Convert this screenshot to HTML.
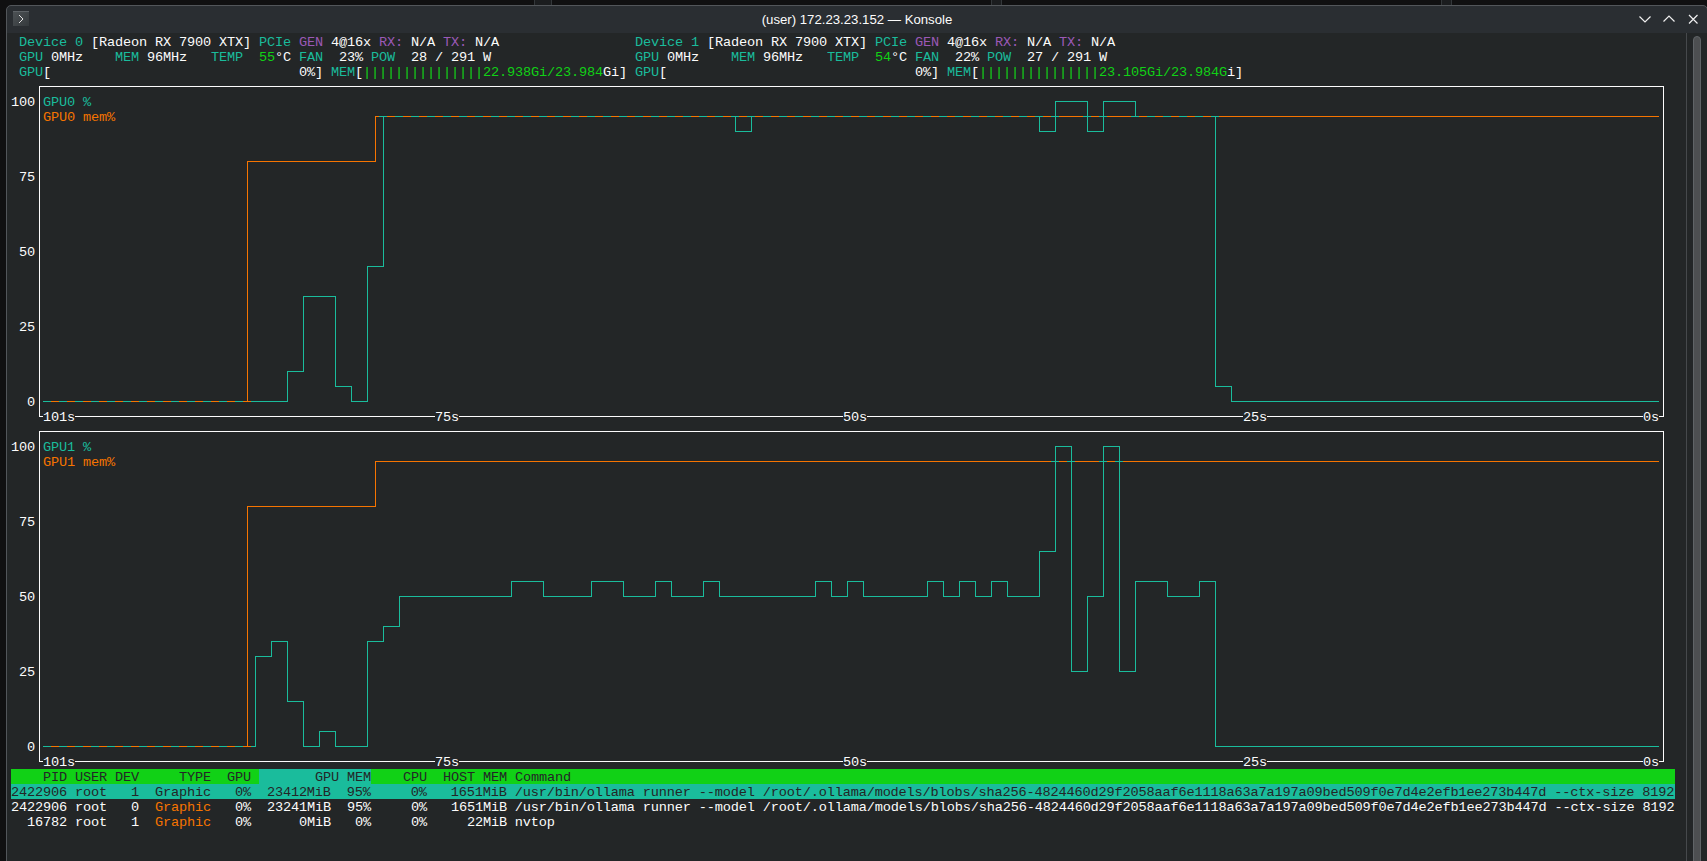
<!DOCTYPE html>
<html><head><meta charset="utf-8"><style>
html,body{margin:0;padding:0;width:1707px;height:861px;overflow:hidden;background:#101011;}
.win{position:absolute;left:6px;top:5px;width:1702px;height:900px;background:#2a2e32;border:1px solid #52565a;border-radius:5px 5px 0 0;box-sizing:border-box;}
.term{position:absolute;left:7px;top:33px;width:1700px;height:828px;background:#232627;}
.t{position:absolute;height:15px;line-height:15px;white-space:pre;font-family:"Liberation Mono",monospace;font-size:13.6px;letter-spacing:-0.161px;}
.plot{position:absolute;left:0;top:0;}
.bgr{position:absolute;height:15px;}
.title{position:absolute;left:0;width:1714px;top:12px;text-align:center;font-family:"Liberation Sans",sans-serif;font-size:13.2px;color:#fcfcfc;line-height:16px;}
.btn{position:absolute;left:13px;top:11px;width:16px;height:15px;background:linear-gradient(135deg,#4c5154,#34393c);border-top:1px solid #5e6367;box-sizing:border-box;}
.sbline{position:absolute;left:1686px;top:33px;width:1px;height:828px;background:#46494c;}
.sbh{position:absolute;left:1693px;top:36px;width:8px;height:900px;background:#4d4f51;border:1px solid #606467;border-radius:4px;box-sizing:border-box;}
.gap{position:absolute;top:-6px;height:11px;background:#1b1d1f;border-left:1px solid #33373a;border-right:1px solid #33373a;box-sizing:border-box;}
</style></head><body>
<div class="gap" style="left:534px;width:18px"></div>
<div class="gap" style="left:991px;width:11px"></div>
<div class="gap" style="left:1441px;width:11px"></div>
<div class="win"></div>
<div class="btn"></div>
<svg style="position:absolute;left:0;top:0" width="60" height="33"><path d="M19 15l4 4-4 4" fill="none" stroke="#e0e0e0" stroke-width="1"/></svg>
<div class="title">(user) 172.23.23.152 — Konsole</div>
<svg style="position:absolute;left:1630px;top:8px" width="77" height="22">
<path d="M9.5 8.5l5.5 5.5 5.5-5.5" fill="none" stroke="#f0f0f0" stroke-width="1.2"/>
<path d="M33.5 13.5l5.5-5.5 5.5 5.5" fill="none" stroke="#f0f0f0" stroke-width="1.2"/>
<path d="M59 7l8.5 8.5M67.5 7l-8.5 8.5" fill="none" stroke="#f0f0f0" stroke-width="1.2"/>
</svg>
<div class="term"></div>
<div class="sbline"></div>
<div class="sbh"></div>
<svg class="plot" width="1707" height="861"><path fill="#fcfcfc" d="M39 86h1v7h-1zM39 86h4v1h-4zM39 93h1v15h-1zM39 108h1v15h-1zM39 123h1v15h-1zM39 138h1v15h-1zM39 153h1v15h-1zM39 168h1v15h-1zM39 183h1v15h-1zM39 198h1v15h-1zM39 213h1v15h-1zM39 228h1v15h-1zM39 243h1v15h-1zM39 258h1v15h-1zM39 273h1v15h-1zM39 288h1v15h-1zM39 303h1v15h-1zM39 318h1v15h-1zM39 333h1v15h-1zM39 348h1v15h-1zM39 363h1v15h-1zM39 378h1v15h-1zM39 393h1v15h-1zM39 408h1v9h-1zM39 416h4v1h-4zM39 431h1v7h-1zM39 431h4v1h-4zM39 438h1v15h-1zM39 453h1v15h-1zM39 468h1v15h-1zM39 483h1v15h-1zM39 498h1v15h-1zM39 513h1v15h-1zM39 528h1v15h-1zM39 543h1v15h-1zM39 558h1v15h-1zM39 573h1v15h-1zM39 588h1v15h-1zM39 603h1v15h-1zM39 618h1v15h-1zM39 633h1v15h-1zM39 648h1v15h-1zM39 663h1v15h-1zM39 678h1v15h-1zM39 693h1v15h-1zM39 708h1v15h-1zM39 723h1v15h-1zM39 738h1v15h-1zM39 753h1v9h-1zM39 761h4v1h-4zM43 86h8v1h-8zM43 431h8v1h-8zM51 86h8v1h-8zM51 431h8v1h-8zM59 86h8v1h-8zM59 431h8v1h-8zM67 86h8v1h-8zM67 431h8v1h-8zM75 86h8v1h-8zM75 416h8v1h-8zM75 431h8v1h-8zM75 761h8v1h-8zM83 86h8v1h-8zM83 416h8v1h-8zM83 431h8v1h-8zM83 761h8v1h-8zM91 86h8v1h-8zM91 416h8v1h-8zM91 431h8v1h-8zM91 761h8v1h-8zM99 86h8v1h-8zM99 416h8v1h-8zM99 431h8v1h-8zM99 761h8v1h-8zM107 86h8v1h-8zM107 416h8v1h-8zM107 431h8v1h-8zM107 761h8v1h-8zM115 86h8v1h-8zM115 416h8v1h-8zM115 431h8v1h-8zM115 761h8v1h-8zM123 86h8v1h-8zM123 416h8v1h-8zM123 431h8v1h-8zM123 761h8v1h-8zM131 86h8v1h-8zM131 416h8v1h-8zM131 431h8v1h-8zM131 761h8v1h-8zM139 86h8v1h-8zM139 416h8v1h-8zM139 431h8v1h-8zM139 761h8v1h-8zM147 86h8v1h-8zM147 416h8v1h-8zM147 431h8v1h-8zM147 761h8v1h-8zM155 86h8v1h-8zM155 416h8v1h-8zM155 431h8v1h-8zM155 761h8v1h-8zM163 86h8v1h-8zM163 416h8v1h-8zM163 431h8v1h-8zM163 761h8v1h-8zM171 86h8v1h-8zM171 416h8v1h-8zM171 431h8v1h-8zM171 761h8v1h-8zM179 86h8v1h-8zM179 416h8v1h-8zM179 431h8v1h-8zM179 761h8v1h-8zM187 86h8v1h-8zM187 416h8v1h-8zM187 431h8v1h-8zM187 761h8v1h-8zM195 86h8v1h-8zM195 416h8v1h-8zM195 431h8v1h-8zM195 761h8v1h-8zM203 86h8v1h-8zM203 416h8v1h-8zM203 431h8v1h-8zM203 761h8v1h-8zM211 86h8v1h-8zM211 416h8v1h-8zM211 431h8v1h-8zM211 761h8v1h-8zM219 86h8v1h-8zM219 416h8v1h-8zM219 431h8v1h-8zM219 761h8v1h-8zM227 86h8v1h-8zM227 416h8v1h-8zM227 431h8v1h-8zM227 761h8v1h-8zM235 86h8v1h-8zM235 416h8v1h-8zM235 431h8v1h-8zM235 761h8v1h-8zM243 86h8v1h-8zM243 416h8v1h-8zM243 431h8v1h-8zM243 761h8v1h-8zM251 86h8v1h-8zM251 416h8v1h-8zM251 431h8v1h-8zM251 761h8v1h-8zM259 86h8v1h-8zM259 416h8v1h-8zM259 431h8v1h-8zM259 761h8v1h-8zM267 86h8v1h-8zM267 416h8v1h-8zM267 431h8v1h-8zM267 761h8v1h-8zM275 86h8v1h-8zM275 416h8v1h-8zM275 431h8v1h-8zM275 761h8v1h-8zM283 86h8v1h-8zM283 416h8v1h-8zM283 431h8v1h-8zM283 761h8v1h-8zM291 86h8v1h-8zM291 416h8v1h-8zM291 431h8v1h-8zM291 761h8v1h-8zM299 86h8v1h-8zM299 416h8v1h-8zM299 431h8v1h-8zM299 761h8v1h-8zM307 86h8v1h-8zM307 416h8v1h-8zM307 431h8v1h-8zM307 761h8v1h-8zM315 86h8v1h-8zM315 416h8v1h-8zM315 431h8v1h-8zM315 761h8v1h-8zM323 86h8v1h-8zM323 416h8v1h-8zM323 431h8v1h-8zM323 761h8v1h-8zM331 86h8v1h-8zM331 416h8v1h-8zM331 431h8v1h-8zM331 761h8v1h-8zM339 86h8v1h-8zM339 416h8v1h-8zM339 431h8v1h-8zM339 761h8v1h-8zM347 86h8v1h-8zM347 416h8v1h-8zM347 431h8v1h-8zM347 761h8v1h-8zM355 86h8v1h-8zM355 416h8v1h-8zM355 431h8v1h-8zM355 761h8v1h-8zM363 86h8v1h-8zM363 416h8v1h-8zM363 431h8v1h-8zM363 761h8v1h-8zM371 86h8v1h-8zM371 416h8v1h-8zM371 431h8v1h-8zM371 761h8v1h-8zM379 86h8v1h-8zM379 416h8v1h-8zM379 431h8v1h-8zM379 761h8v1h-8zM387 86h8v1h-8zM387 416h8v1h-8zM387 431h8v1h-8zM387 761h8v1h-8zM395 86h8v1h-8zM395 416h8v1h-8zM395 431h8v1h-8zM395 761h8v1h-8zM403 86h8v1h-8zM403 416h8v1h-8zM403 431h8v1h-8zM403 761h8v1h-8zM411 86h8v1h-8zM411 416h8v1h-8zM411 431h8v1h-8zM411 761h8v1h-8zM419 86h8v1h-8zM419 416h8v1h-8zM419 431h8v1h-8zM419 761h8v1h-8zM427 86h8v1h-8zM427 416h8v1h-8zM427 431h8v1h-8zM427 761h8v1h-8zM435 86h8v1h-8zM435 431h8v1h-8zM443 86h8v1h-8zM443 431h8v1h-8zM451 86h8v1h-8zM451 431h8v1h-8zM459 86h8v1h-8zM459 416h8v1h-8zM459 431h8v1h-8zM459 761h8v1h-8zM467 86h8v1h-8zM467 416h8v1h-8zM467 431h8v1h-8zM467 761h8v1h-8zM475 86h8v1h-8zM475 416h8v1h-8zM475 431h8v1h-8zM475 761h8v1h-8zM483 86h8v1h-8zM483 416h8v1h-8zM483 431h8v1h-8zM483 761h8v1h-8zM491 86h8v1h-8zM491 416h8v1h-8zM491 431h8v1h-8zM491 761h8v1h-8zM499 86h8v1h-8zM499 416h8v1h-8zM499 431h8v1h-8zM499 761h8v1h-8zM507 86h8v1h-8zM507 416h8v1h-8zM507 431h8v1h-8zM507 761h8v1h-8zM515 86h8v1h-8zM515 416h8v1h-8zM515 431h8v1h-8zM515 761h8v1h-8zM523 86h8v1h-8zM523 416h8v1h-8zM523 431h8v1h-8zM523 761h8v1h-8zM531 86h8v1h-8zM531 416h8v1h-8zM531 431h8v1h-8zM531 761h8v1h-8zM539 86h8v1h-8zM539 416h8v1h-8zM539 431h8v1h-8zM539 761h8v1h-8zM547 86h8v1h-8zM547 416h8v1h-8zM547 431h8v1h-8zM547 761h8v1h-8zM555 86h8v1h-8zM555 416h8v1h-8zM555 431h8v1h-8zM555 761h8v1h-8zM563 86h8v1h-8zM563 416h8v1h-8zM563 431h8v1h-8zM563 761h8v1h-8zM571 86h8v1h-8zM571 416h8v1h-8zM571 431h8v1h-8zM571 761h8v1h-8zM579 86h8v1h-8zM579 416h8v1h-8zM579 431h8v1h-8zM579 761h8v1h-8zM587 86h8v1h-8zM587 416h8v1h-8zM587 431h8v1h-8zM587 761h8v1h-8zM595 86h8v1h-8zM595 416h8v1h-8zM595 431h8v1h-8zM595 761h8v1h-8zM603 86h8v1h-8zM603 416h8v1h-8zM603 431h8v1h-8zM603 761h8v1h-8zM611 86h8v1h-8zM611 416h8v1h-8zM611 431h8v1h-8zM611 761h8v1h-8zM619 86h8v1h-8zM619 416h8v1h-8zM619 431h8v1h-8zM619 761h8v1h-8zM627 86h8v1h-8zM627 416h8v1h-8zM627 431h8v1h-8zM627 761h8v1h-8zM635 86h8v1h-8zM635 416h8v1h-8zM635 431h8v1h-8zM635 761h8v1h-8zM643 86h8v1h-8zM643 416h8v1h-8zM643 431h8v1h-8zM643 761h8v1h-8zM651 86h8v1h-8zM651 416h8v1h-8zM651 431h8v1h-8zM651 761h8v1h-8zM659 86h8v1h-8zM659 416h8v1h-8zM659 431h8v1h-8zM659 761h8v1h-8zM667 86h8v1h-8zM667 416h8v1h-8zM667 431h8v1h-8zM667 761h8v1h-8zM675 86h8v1h-8zM675 416h8v1h-8zM675 431h8v1h-8zM675 761h8v1h-8zM683 86h8v1h-8zM683 416h8v1h-8zM683 431h8v1h-8zM683 761h8v1h-8zM691 86h8v1h-8zM691 416h8v1h-8zM691 431h8v1h-8zM691 761h8v1h-8zM699 86h8v1h-8zM699 416h8v1h-8zM699 431h8v1h-8zM699 761h8v1h-8zM707 86h8v1h-8zM707 416h8v1h-8zM707 431h8v1h-8zM707 761h8v1h-8zM715 86h8v1h-8zM715 416h8v1h-8zM715 431h8v1h-8zM715 761h8v1h-8zM723 86h8v1h-8zM723 416h8v1h-8zM723 431h8v1h-8zM723 761h8v1h-8zM731 86h8v1h-8zM731 416h8v1h-8zM731 431h8v1h-8zM731 761h8v1h-8zM739 86h8v1h-8zM739 416h8v1h-8zM739 431h8v1h-8zM739 761h8v1h-8zM747 86h8v1h-8zM747 416h8v1h-8zM747 431h8v1h-8zM747 761h8v1h-8zM755 86h8v1h-8zM755 416h8v1h-8zM755 431h8v1h-8zM755 761h8v1h-8zM763 86h8v1h-8zM763 416h8v1h-8zM763 431h8v1h-8zM763 761h8v1h-8zM771 86h8v1h-8zM771 416h8v1h-8zM771 431h8v1h-8zM771 761h8v1h-8zM779 86h8v1h-8zM779 416h8v1h-8zM779 431h8v1h-8zM779 761h8v1h-8zM787 86h8v1h-8zM787 416h8v1h-8zM787 431h8v1h-8zM787 761h8v1h-8zM795 86h8v1h-8zM795 416h8v1h-8zM795 431h8v1h-8zM795 761h8v1h-8zM803 86h8v1h-8zM803 416h8v1h-8zM803 431h8v1h-8zM803 761h8v1h-8zM811 86h8v1h-8zM811 416h8v1h-8zM811 431h8v1h-8zM811 761h8v1h-8zM819 86h8v1h-8zM819 416h8v1h-8zM819 431h8v1h-8zM819 761h8v1h-8zM827 86h8v1h-8zM827 416h8v1h-8zM827 431h8v1h-8zM827 761h8v1h-8zM835 86h8v1h-8zM835 416h8v1h-8zM835 431h8v1h-8zM835 761h8v1h-8zM843 86h8v1h-8zM843 431h8v1h-8zM851 86h8v1h-8zM851 431h8v1h-8zM859 86h8v1h-8zM859 431h8v1h-8zM867 86h8v1h-8zM867 416h8v1h-8zM867 431h8v1h-8zM867 761h8v1h-8zM875 86h8v1h-8zM875 416h8v1h-8zM875 431h8v1h-8zM875 761h8v1h-8zM883 86h8v1h-8zM883 416h8v1h-8zM883 431h8v1h-8zM883 761h8v1h-8zM891 86h8v1h-8zM891 416h8v1h-8zM891 431h8v1h-8zM891 761h8v1h-8zM899 86h8v1h-8zM899 416h8v1h-8zM899 431h8v1h-8zM899 761h8v1h-8zM907 86h8v1h-8zM907 416h8v1h-8zM907 431h8v1h-8zM907 761h8v1h-8zM915 86h8v1h-8zM915 416h8v1h-8zM915 431h8v1h-8zM915 761h8v1h-8zM923 86h8v1h-8zM923 416h8v1h-8zM923 431h8v1h-8zM923 761h8v1h-8zM931 86h8v1h-8zM931 416h8v1h-8zM931 431h8v1h-8zM931 761h8v1h-8zM939 86h8v1h-8zM939 416h8v1h-8zM939 431h8v1h-8zM939 761h8v1h-8zM947 86h8v1h-8zM947 416h8v1h-8zM947 431h8v1h-8zM947 761h8v1h-8zM955 86h8v1h-8zM955 416h8v1h-8zM955 431h8v1h-8zM955 761h8v1h-8zM963 86h8v1h-8zM963 416h8v1h-8zM963 431h8v1h-8zM963 761h8v1h-8zM971 86h8v1h-8zM971 416h8v1h-8zM971 431h8v1h-8zM971 761h8v1h-8zM979 86h8v1h-8zM979 416h8v1h-8zM979 431h8v1h-8zM979 761h8v1h-8zM987 86h8v1h-8zM987 416h8v1h-8zM987 431h8v1h-8zM987 761h8v1h-8zM995 86h8v1h-8zM995 416h8v1h-8zM995 431h8v1h-8zM995 761h8v1h-8zM1003 86h8v1h-8zM1003 416h8v1h-8zM1003 431h8v1h-8zM1003 761h8v1h-8zM1011 86h8v1h-8zM1011 416h8v1h-8zM1011 431h8v1h-8zM1011 761h8v1h-8zM1019 86h8v1h-8zM1019 416h8v1h-8zM1019 431h8v1h-8zM1019 761h8v1h-8zM1027 86h8v1h-8zM1027 416h8v1h-8zM1027 431h8v1h-8zM1027 761h8v1h-8zM1035 86h8v1h-8zM1035 416h8v1h-8zM1035 431h8v1h-8zM1035 761h8v1h-8zM1043 86h8v1h-8zM1043 416h8v1h-8zM1043 431h8v1h-8zM1043 761h8v1h-8zM1051 86h8v1h-8zM1051 416h8v1h-8zM1051 431h8v1h-8zM1051 761h8v1h-8zM1059 86h8v1h-8zM1059 416h8v1h-8zM1059 431h8v1h-8zM1059 761h8v1h-8zM1067 86h8v1h-8zM1067 416h8v1h-8zM1067 431h8v1h-8zM1067 761h8v1h-8zM1075 86h8v1h-8zM1075 416h8v1h-8zM1075 431h8v1h-8zM1075 761h8v1h-8zM1083 86h8v1h-8zM1083 416h8v1h-8zM1083 431h8v1h-8zM1083 761h8v1h-8zM1091 86h8v1h-8zM1091 416h8v1h-8zM1091 431h8v1h-8zM1091 761h8v1h-8zM1099 86h8v1h-8zM1099 416h8v1h-8zM1099 431h8v1h-8zM1099 761h8v1h-8zM1107 86h8v1h-8zM1107 416h8v1h-8zM1107 431h8v1h-8zM1107 761h8v1h-8zM1115 86h8v1h-8zM1115 416h8v1h-8zM1115 431h8v1h-8zM1115 761h8v1h-8zM1123 86h8v1h-8zM1123 416h8v1h-8zM1123 431h8v1h-8zM1123 761h8v1h-8zM1131 86h8v1h-8zM1131 416h8v1h-8zM1131 431h8v1h-8zM1131 761h8v1h-8zM1139 86h8v1h-8zM1139 416h8v1h-8zM1139 431h8v1h-8zM1139 761h8v1h-8zM1147 86h8v1h-8zM1147 416h8v1h-8zM1147 431h8v1h-8zM1147 761h8v1h-8zM1155 86h8v1h-8zM1155 416h8v1h-8zM1155 431h8v1h-8zM1155 761h8v1h-8zM1163 86h8v1h-8zM1163 416h8v1h-8zM1163 431h8v1h-8zM1163 761h8v1h-8zM1171 86h8v1h-8zM1171 416h8v1h-8zM1171 431h8v1h-8zM1171 761h8v1h-8zM1179 86h8v1h-8zM1179 416h8v1h-8zM1179 431h8v1h-8zM1179 761h8v1h-8zM1187 86h8v1h-8zM1187 416h8v1h-8zM1187 431h8v1h-8zM1187 761h8v1h-8zM1195 86h8v1h-8zM1195 416h8v1h-8zM1195 431h8v1h-8zM1195 761h8v1h-8zM1203 86h8v1h-8zM1203 416h8v1h-8zM1203 431h8v1h-8zM1203 761h8v1h-8zM1211 86h8v1h-8zM1211 416h8v1h-8zM1211 431h8v1h-8zM1211 761h8v1h-8zM1219 86h8v1h-8zM1219 416h8v1h-8zM1219 431h8v1h-8zM1219 761h8v1h-8zM1227 86h8v1h-8zM1227 416h8v1h-8zM1227 431h8v1h-8zM1227 761h8v1h-8zM1235 86h8v1h-8zM1235 416h8v1h-8zM1235 431h8v1h-8zM1235 761h8v1h-8zM1243 86h8v1h-8zM1243 431h8v1h-8zM1251 86h8v1h-8zM1251 431h8v1h-8zM1259 86h8v1h-8zM1259 431h8v1h-8zM1267 86h8v1h-8zM1267 416h8v1h-8zM1267 431h8v1h-8zM1267 761h8v1h-8zM1275 86h8v1h-8zM1275 416h8v1h-8zM1275 431h8v1h-8zM1275 761h8v1h-8zM1283 86h8v1h-8zM1283 416h8v1h-8zM1283 431h8v1h-8zM1283 761h8v1h-8zM1291 86h8v1h-8zM1291 416h8v1h-8zM1291 431h8v1h-8zM1291 761h8v1h-8zM1299 86h8v1h-8zM1299 416h8v1h-8zM1299 431h8v1h-8zM1299 761h8v1h-8zM1307 86h8v1h-8zM1307 416h8v1h-8zM1307 431h8v1h-8zM1307 761h8v1h-8zM1315 86h8v1h-8zM1315 416h8v1h-8zM1315 431h8v1h-8zM1315 761h8v1h-8zM1323 86h8v1h-8zM1323 416h8v1h-8zM1323 431h8v1h-8zM1323 761h8v1h-8zM1331 86h8v1h-8zM1331 416h8v1h-8zM1331 431h8v1h-8zM1331 761h8v1h-8zM1339 86h8v1h-8zM1339 416h8v1h-8zM1339 431h8v1h-8zM1339 761h8v1h-8zM1347 86h8v1h-8zM1347 416h8v1h-8zM1347 431h8v1h-8zM1347 761h8v1h-8zM1355 86h8v1h-8zM1355 416h8v1h-8zM1355 431h8v1h-8zM1355 761h8v1h-8zM1363 86h8v1h-8zM1363 416h8v1h-8zM1363 431h8v1h-8zM1363 761h8v1h-8zM1371 86h8v1h-8zM1371 416h8v1h-8zM1371 431h8v1h-8zM1371 761h8v1h-8zM1379 86h8v1h-8zM1379 416h8v1h-8zM1379 431h8v1h-8zM1379 761h8v1h-8zM1387 86h8v1h-8zM1387 416h8v1h-8zM1387 431h8v1h-8zM1387 761h8v1h-8zM1395 86h8v1h-8zM1395 416h8v1h-8zM1395 431h8v1h-8zM1395 761h8v1h-8zM1403 86h8v1h-8zM1403 416h8v1h-8zM1403 431h8v1h-8zM1403 761h8v1h-8zM1411 86h8v1h-8zM1411 416h8v1h-8zM1411 431h8v1h-8zM1411 761h8v1h-8zM1419 86h8v1h-8zM1419 416h8v1h-8zM1419 431h8v1h-8zM1419 761h8v1h-8zM1427 86h8v1h-8zM1427 416h8v1h-8zM1427 431h8v1h-8zM1427 761h8v1h-8zM1435 86h8v1h-8zM1435 416h8v1h-8zM1435 431h8v1h-8zM1435 761h8v1h-8zM1443 86h8v1h-8zM1443 416h8v1h-8zM1443 431h8v1h-8zM1443 761h8v1h-8zM1451 86h8v1h-8zM1451 416h8v1h-8zM1451 431h8v1h-8zM1451 761h8v1h-8zM1459 86h8v1h-8zM1459 416h8v1h-8zM1459 431h8v1h-8zM1459 761h8v1h-8zM1467 86h8v1h-8zM1467 416h8v1h-8zM1467 431h8v1h-8zM1467 761h8v1h-8zM1475 86h8v1h-8zM1475 416h8v1h-8zM1475 431h8v1h-8zM1475 761h8v1h-8zM1483 86h8v1h-8zM1483 416h8v1h-8zM1483 431h8v1h-8zM1483 761h8v1h-8zM1491 86h8v1h-8zM1491 416h8v1h-8zM1491 431h8v1h-8zM1491 761h8v1h-8zM1499 86h8v1h-8zM1499 416h8v1h-8zM1499 431h8v1h-8zM1499 761h8v1h-8zM1507 86h8v1h-8zM1507 416h8v1h-8zM1507 431h8v1h-8zM1507 761h8v1h-8zM1515 86h8v1h-8zM1515 416h8v1h-8zM1515 431h8v1h-8zM1515 761h8v1h-8zM1523 86h8v1h-8zM1523 416h8v1h-8zM1523 431h8v1h-8zM1523 761h8v1h-8zM1531 86h8v1h-8zM1531 416h8v1h-8zM1531 431h8v1h-8zM1531 761h8v1h-8zM1539 86h8v1h-8zM1539 416h8v1h-8zM1539 431h8v1h-8zM1539 761h8v1h-8zM1547 86h8v1h-8zM1547 416h8v1h-8zM1547 431h8v1h-8zM1547 761h8v1h-8zM1555 86h8v1h-8zM1555 416h8v1h-8zM1555 431h8v1h-8zM1555 761h8v1h-8zM1563 86h8v1h-8zM1563 416h8v1h-8zM1563 431h8v1h-8zM1563 761h8v1h-8zM1571 86h8v1h-8zM1571 416h8v1h-8zM1571 431h8v1h-8zM1571 761h8v1h-8zM1579 86h8v1h-8zM1579 416h8v1h-8zM1579 431h8v1h-8zM1579 761h8v1h-8zM1587 86h8v1h-8zM1587 416h8v1h-8zM1587 431h8v1h-8zM1587 761h8v1h-8zM1595 86h8v1h-8zM1595 416h8v1h-8zM1595 431h8v1h-8zM1595 761h8v1h-8zM1603 86h8v1h-8zM1603 416h8v1h-8zM1603 431h8v1h-8zM1603 761h8v1h-8zM1611 86h8v1h-8zM1611 416h8v1h-8zM1611 431h8v1h-8zM1611 761h8v1h-8zM1619 86h8v1h-8zM1619 416h8v1h-8zM1619 431h8v1h-8zM1619 761h8v1h-8zM1627 86h8v1h-8zM1627 416h8v1h-8zM1627 431h8v1h-8zM1627 761h8v1h-8zM1635 86h8v1h-8zM1635 416h8v1h-8zM1635 431h8v1h-8zM1635 761h8v1h-8zM1643 86h8v1h-8zM1643 431h8v1h-8zM1651 86h8v1h-8zM1651 431h8v1h-8zM1659 86h5v1h-5zM1659 416h5v1h-5zM1659 431h5v1h-5zM1659 761h5v1h-5zM1663 86h1v7h-1zM1663 93h1v15h-1zM1663 108h1v15h-1zM1663 123h1v15h-1zM1663 138h1v15h-1zM1663 153h1v15h-1zM1663 168h1v15h-1zM1663 183h1v15h-1zM1663 198h1v15h-1zM1663 213h1v15h-1zM1663 228h1v15h-1zM1663 243h1v15h-1zM1663 258h1v15h-1zM1663 273h1v15h-1zM1663 288h1v15h-1zM1663 303h1v15h-1zM1663 318h1v15h-1zM1663 333h1v15h-1zM1663 348h1v15h-1zM1663 363h1v15h-1zM1663 378h1v15h-1zM1663 393h1v15h-1zM1663 408h1v9h-1zM1663 431h1v7h-1zM1663 438h1v15h-1zM1663 453h1v15h-1zM1663 468h1v15h-1zM1663 483h1v15h-1zM1663 498h1v15h-1zM1663 513h1v15h-1zM1663 528h1v15h-1zM1663 543h1v15h-1zM1663 558h1v15h-1zM1663 573h1v15h-1zM1663 588h1v15h-1zM1663 603h1v15h-1zM1663 618h1v15h-1zM1663 633h1v15h-1zM1663 648h1v15h-1zM1663 663h1v15h-1zM1663 678h1v15h-1zM1663 693h1v15h-1zM1663 708h1v15h-1zM1663 723h1v15h-1zM1663 738h1v15h-1zM1663 753h1v9h-1z"/><path fill="#f67400" d="M51 401h8v1h-8zM51 746h8v1h-8zM67 401h8v1h-8zM67 746h8v1h-8zM83 401h8v1h-8zM83 746h8v1h-8zM99 401h8v1h-8zM99 746h8v1h-8zM115 401h8v1h-8zM115 746h8v1h-8zM131 401h8v1h-8zM131 746h8v1h-8zM147 401h8v1h-8zM147 746h8v1h-8zM163 401h8v1h-8zM163 746h8v1h-8zM179 401h8v1h-8zM179 746h8v1h-8zM195 401h8v1h-8zM195 746h8v1h-8zM211 401h8v1h-8zM211 746h8v1h-8zM227 401h8v1h-8zM227 746h8v1h-8zM243 401h8v1h-8zM243 746h8v1h-8zM247 161h1v7h-1zM247 161h4v1h-4zM247 168h1v15h-1zM247 183h1v15h-1zM247 198h1v15h-1zM247 213h1v15h-1zM247 228h1v15h-1zM247 243h1v15h-1zM247 258h1v15h-1zM247 273h1v15h-1zM247 288h1v15h-1zM247 303h1v15h-1zM247 318h1v15h-1zM247 333h1v15h-1zM247 348h1v15h-1zM247 363h1v15h-1zM247 378h1v15h-1zM247 393h1v9h-1zM247 506h1v7h-1zM247 506h4v1h-4zM247 513h1v15h-1zM247 528h1v15h-1zM247 543h1v15h-1zM247 558h1v15h-1zM247 573h1v15h-1zM247 588h1v15h-1zM247 603h1v15h-1zM247 618h1v15h-1zM247 633h1v15h-1zM247 648h1v15h-1zM247 663h1v15h-1zM247 678h1v15h-1zM247 693h1v15h-1zM247 708h1v15h-1zM247 723h1v15h-1zM247 738h1v9h-1zM251 161h8v1h-8zM251 506h8v1h-8zM259 161h8v1h-8zM259 506h8v1h-8zM267 161h8v1h-8zM267 506h8v1h-8zM275 161h8v1h-8zM275 506h8v1h-8zM283 161h8v1h-8zM283 506h8v1h-8zM291 161h8v1h-8zM291 506h8v1h-8zM299 161h8v1h-8zM299 506h8v1h-8zM307 161h8v1h-8zM307 506h8v1h-8zM315 161h8v1h-8zM315 506h8v1h-8zM323 161h8v1h-8zM323 506h8v1h-8zM331 161h8v1h-8zM331 506h8v1h-8zM339 161h8v1h-8zM339 506h8v1h-8zM347 161h8v1h-8zM347 506h8v1h-8zM355 161h8v1h-8zM355 506h8v1h-8zM363 161h8v1h-8zM363 506h8v1h-8zM371 161h5v1h-5zM371 506h5v1h-5zM375 116h1v7h-1zM375 116h4v1h-4zM375 123h1v15h-1zM375 138h1v15h-1zM375 153h1v9h-1zM375 461h1v7h-1zM375 461h4v1h-4zM375 468h1v15h-1zM375 483h1v15h-1zM375 498h1v9h-1zM379 461h8v1h-8zM387 116h8v1h-8zM387 461h8v1h-8zM395 461h8v1h-8zM403 116h8v1h-8zM403 461h8v1h-8zM411 461h8v1h-8zM419 116h8v1h-8zM419 461h8v1h-8zM427 461h8v1h-8zM435 116h8v1h-8zM435 461h8v1h-8zM443 461h8v1h-8zM451 116h8v1h-8zM451 461h8v1h-8zM459 461h8v1h-8zM467 116h8v1h-8zM467 461h8v1h-8zM475 461h8v1h-8zM483 116h8v1h-8zM483 461h8v1h-8zM491 461h8v1h-8zM499 116h8v1h-8zM499 461h8v1h-8zM507 461h8v1h-8zM515 116h8v1h-8zM515 461h8v1h-8zM523 461h8v1h-8zM531 116h8v1h-8zM531 461h8v1h-8zM539 461h8v1h-8zM547 116h8v1h-8zM547 461h8v1h-8zM555 461h8v1h-8zM563 116h8v1h-8zM563 461h8v1h-8zM571 461h8v1h-8zM579 116h8v1h-8zM579 461h8v1h-8zM587 461h8v1h-8zM595 116h8v1h-8zM595 461h8v1h-8zM603 461h8v1h-8zM611 116h8v1h-8zM611 461h8v1h-8zM619 461h8v1h-8zM627 116h8v1h-8zM627 461h8v1h-8zM635 461h8v1h-8zM643 116h8v1h-8zM643 461h8v1h-8zM651 461h8v1h-8zM659 116h8v1h-8zM659 461h8v1h-8zM667 461h8v1h-8zM675 116h8v1h-8zM675 461h8v1h-8zM683 461h8v1h-8zM691 116h8v1h-8zM691 461h8v1h-8zM699 461h8v1h-8zM707 116h8v1h-8zM707 461h8v1h-8zM715 461h8v1h-8zM723 116h8v1h-8zM723 461h8v1h-8zM731 461h8v1h-8zM739 116h8v1h-8zM739 461h8v1h-8zM747 461h8v1h-8zM755 116h8v1h-8zM755 461h8v1h-8zM763 461h8v1h-8zM771 116h8v1h-8zM771 461h8v1h-8zM779 461h8v1h-8zM787 116h8v1h-8zM787 461h8v1h-8zM795 461h8v1h-8zM803 116h8v1h-8zM803 461h8v1h-8zM811 461h8v1h-8zM819 116h8v1h-8zM819 461h8v1h-8zM827 461h8v1h-8zM835 116h8v1h-8zM835 461h8v1h-8zM843 461h8v1h-8zM851 116h8v1h-8zM851 461h8v1h-8zM859 461h8v1h-8zM867 116h8v1h-8zM867 461h8v1h-8zM875 461h8v1h-8zM883 116h8v1h-8zM883 461h8v1h-8zM891 461h8v1h-8zM899 116h8v1h-8zM899 461h8v1h-8zM907 461h8v1h-8zM915 116h8v1h-8zM915 461h8v1h-8zM923 461h8v1h-8zM931 116h8v1h-8zM931 461h8v1h-8zM939 461h8v1h-8zM947 116h8v1h-8zM947 461h8v1h-8zM955 461h8v1h-8zM963 116h8v1h-8zM963 461h8v1h-8zM971 461h8v1h-8zM979 116h8v1h-8zM979 461h8v1h-8zM987 461h8v1h-8zM995 116h8v1h-8zM995 461h8v1h-8zM1003 461h8v1h-8zM1011 116h8v1h-8zM1011 461h8v1h-8zM1019 461h8v1h-8zM1027 116h8v1h-8zM1027 461h8v1h-8zM1035 461h8v1h-8zM1043 116h8v1h-8zM1043 461h8v1h-8zM1059 116h8v1h-8zM1059 461h8v1h-8zM1067 116h8v1h-8zM1075 116h8v1h-8zM1075 461h8v1h-8zM1083 461h8v1h-8zM1091 116h8v1h-8zM1091 461h8v1h-8zM1107 116h8v1h-8zM1107 461h8v1h-8zM1115 116h8v1h-8zM1123 116h8v1h-8zM1123 461h8v1h-8zM1131 461h8v1h-8zM1139 116h8v1h-8zM1139 461h8v1h-8zM1147 461h8v1h-8zM1155 116h8v1h-8zM1155 461h8v1h-8zM1163 461h8v1h-8zM1171 116h8v1h-8zM1171 461h8v1h-8zM1179 461h8v1h-8zM1187 116h8v1h-8zM1187 461h8v1h-8zM1195 461h8v1h-8zM1203 116h8v1h-8zM1203 461h8v1h-8zM1211 461h8v1h-8zM1219 116h8v1h-8zM1219 461h8v1h-8zM1227 116h8v1h-8zM1227 461h8v1h-8zM1235 116h8v1h-8zM1235 461h8v1h-8zM1243 116h8v1h-8zM1243 461h8v1h-8zM1251 116h8v1h-8zM1251 461h8v1h-8zM1259 116h8v1h-8zM1259 461h8v1h-8zM1267 116h8v1h-8zM1267 461h8v1h-8zM1275 116h8v1h-8zM1275 461h8v1h-8zM1283 116h8v1h-8zM1283 461h8v1h-8zM1291 116h8v1h-8zM1291 461h8v1h-8zM1299 116h8v1h-8zM1299 461h8v1h-8zM1307 116h8v1h-8zM1307 461h8v1h-8zM1315 116h8v1h-8zM1315 461h8v1h-8zM1323 116h8v1h-8zM1323 461h8v1h-8zM1331 116h8v1h-8zM1331 461h8v1h-8zM1339 116h8v1h-8zM1339 461h8v1h-8zM1347 116h8v1h-8zM1347 461h8v1h-8zM1355 116h8v1h-8zM1355 461h8v1h-8zM1363 116h8v1h-8zM1363 461h8v1h-8zM1371 116h8v1h-8zM1371 461h8v1h-8zM1379 116h8v1h-8zM1379 461h8v1h-8zM1387 116h8v1h-8zM1387 461h8v1h-8zM1395 116h8v1h-8zM1395 461h8v1h-8zM1403 116h8v1h-8zM1403 461h8v1h-8zM1411 116h8v1h-8zM1411 461h8v1h-8zM1419 116h8v1h-8zM1419 461h8v1h-8zM1427 116h8v1h-8zM1427 461h8v1h-8zM1435 116h8v1h-8zM1435 461h8v1h-8zM1443 116h8v1h-8zM1443 461h8v1h-8zM1451 116h8v1h-8zM1451 461h8v1h-8zM1459 116h8v1h-8zM1459 461h8v1h-8zM1467 116h8v1h-8zM1467 461h8v1h-8zM1475 116h8v1h-8zM1475 461h8v1h-8zM1483 116h8v1h-8zM1483 461h8v1h-8zM1491 116h8v1h-8zM1491 461h8v1h-8zM1499 116h8v1h-8zM1499 461h8v1h-8zM1507 116h8v1h-8zM1507 461h8v1h-8zM1515 116h8v1h-8zM1515 461h8v1h-8zM1523 116h8v1h-8zM1523 461h8v1h-8zM1531 116h8v1h-8zM1531 461h8v1h-8zM1539 116h8v1h-8zM1539 461h8v1h-8zM1547 116h8v1h-8zM1547 461h8v1h-8zM1555 116h8v1h-8zM1555 461h8v1h-8zM1563 116h8v1h-8zM1563 461h8v1h-8zM1571 116h8v1h-8zM1571 461h8v1h-8zM1579 116h8v1h-8zM1579 461h8v1h-8zM1587 116h8v1h-8zM1587 461h8v1h-8zM1595 116h8v1h-8zM1595 461h8v1h-8zM1603 116h8v1h-8zM1603 461h8v1h-8zM1611 116h8v1h-8zM1611 461h8v1h-8zM1619 116h8v1h-8zM1619 461h8v1h-8zM1627 116h8v1h-8zM1627 461h8v1h-8zM1635 116h8v1h-8zM1635 461h8v1h-8zM1643 116h8v1h-8zM1643 461h8v1h-8zM1651 116h8v1h-8zM1651 461h8v1h-8z"/><path fill="#1abc9c" d="M43 401h8v1h-8zM43 746h8v1h-8zM59 401h8v1h-8zM59 746h8v1h-8zM75 401h8v1h-8zM75 746h8v1h-8zM91 401h8v1h-8zM91 746h8v1h-8zM107 401h8v1h-8zM107 746h8v1h-8zM123 401h8v1h-8zM123 746h8v1h-8zM139 401h8v1h-8zM139 746h8v1h-8zM155 401h8v1h-8zM155 746h8v1h-8zM171 401h8v1h-8zM171 746h8v1h-8zM187 401h8v1h-8zM187 746h8v1h-8zM203 401h8v1h-8zM203 746h8v1h-8zM219 401h8v1h-8zM219 746h8v1h-8zM235 401h8v1h-8zM235 746h8v1h-8zM251 401h8v1h-8zM251 746h5v1h-5zM255 656h1v7h-1zM255 656h4v1h-4zM255 663h1v15h-1zM255 678h1v15h-1zM255 693h1v15h-1zM255 708h1v15h-1zM255 723h1v15h-1zM255 738h1v9h-1zM259 401h8v1h-8zM259 656h8v1h-8zM267 401h8v1h-8zM267 656h5v1h-5zM271 641h1v7h-1zM271 641h4v1h-4zM271 648h1v9h-1zM275 401h8v1h-8zM275 641h8v1h-8zM283 401h5v1h-5zM283 641h5v1h-5zM287 371h1v7h-1zM287 371h4v1h-4zM287 378h1v15h-1zM287 393h1v9h-1zM287 641h1v7h-1zM287 648h1v15h-1zM287 663h1v15h-1zM287 678h1v15h-1zM287 693h1v9h-1zM287 701h4v1h-4zM291 371h8v1h-8zM291 701h8v1h-8zM299 371h5v1h-5zM299 701h5v1h-5zM303 296h1v7h-1zM303 296h4v1h-4zM303 303h1v15h-1zM303 318h1v15h-1zM303 333h1v15h-1zM303 348h1v15h-1zM303 363h1v9h-1zM303 701h1v7h-1zM303 708h1v15h-1zM303 723h1v15h-1zM303 738h1v9h-1zM303 746h4v1h-4zM307 296h8v1h-8zM307 746h8v1h-8zM315 296h8v1h-8zM315 746h5v1h-5zM319 731h1v7h-1zM319 731h4v1h-4zM319 738h1v9h-1zM323 296h8v1h-8zM323 731h8v1h-8zM331 296h5v1h-5zM331 731h5v1h-5zM335 296h1v7h-1zM335 303h1v15h-1zM335 318h1v15h-1zM335 333h1v15h-1zM335 348h1v15h-1zM335 363h1v15h-1zM335 378h1v9h-1zM335 386h4v1h-4zM335 731h1v7h-1zM335 738h1v9h-1zM335 746h4v1h-4zM339 386h8v1h-8zM339 746h8v1h-8zM347 386h5v1h-5zM347 746h8v1h-8zM351 386h1v7h-1zM351 393h1v9h-1zM351 401h4v1h-4zM355 401h8v1h-8zM355 746h8v1h-8zM363 401h5v1h-5zM363 746h5v1h-5zM367 266h1v7h-1zM367 266h4v1h-4zM367 273h1v15h-1zM367 288h1v15h-1zM367 303h1v15h-1zM367 318h1v15h-1zM367 333h1v15h-1zM367 348h1v15h-1zM367 363h1v15h-1zM367 378h1v15h-1zM367 393h1v9h-1zM367 641h1v7h-1zM367 641h4v1h-4zM367 648h1v15h-1zM367 663h1v15h-1zM367 678h1v15h-1zM367 693h1v15h-1zM367 708h1v15h-1zM367 723h1v15h-1zM367 738h1v9h-1zM371 266h8v1h-8zM371 641h8v1h-8zM379 116h8v1h-8zM379 266h5v1h-5zM379 641h5v1h-5zM383 116h1v7h-1zM383 123h1v15h-1zM383 138h1v15h-1zM383 153h1v15h-1zM383 168h1v15h-1zM383 183h1v15h-1zM383 198h1v15h-1zM383 213h1v15h-1zM383 228h1v15h-1zM383 243h1v15h-1zM383 258h1v9h-1zM383 626h1v7h-1zM383 626h4v1h-4zM383 633h1v9h-1zM387 626h8v1h-8zM395 116h8v1h-8zM395 626h5v1h-5zM399 596h1v7h-1zM399 596h4v1h-4zM399 603h1v15h-1zM399 618h1v9h-1zM403 596h8v1h-8zM411 116h8v1h-8zM411 596h8v1h-8zM419 596h8v1h-8zM427 116h8v1h-8zM427 596h8v1h-8zM435 596h8v1h-8zM443 116h8v1h-8zM443 596h8v1h-8zM451 596h8v1h-8zM459 116h8v1h-8zM459 596h8v1h-8zM467 596h8v1h-8zM475 116h8v1h-8zM475 596h8v1h-8zM483 596h8v1h-8zM491 116h8v1h-8zM491 596h8v1h-8zM499 596h8v1h-8zM507 116h8v1h-8zM507 596h5v1h-5zM511 581h1v7h-1zM511 581h4v1h-4zM511 588h1v9h-1zM515 581h8v1h-8zM523 116h8v1h-8zM523 581h8v1h-8zM531 581h8v1h-8zM539 116h8v1h-8zM539 581h5v1h-5zM543 581h1v7h-1zM543 588h1v9h-1zM543 596h4v1h-4zM547 596h8v1h-8zM555 116h8v1h-8zM555 596h8v1h-8zM563 596h8v1h-8zM571 116h8v1h-8zM571 596h8v1h-8zM579 596h8v1h-8zM587 116h8v1h-8zM587 596h5v1h-5zM591 581h1v7h-1zM591 581h4v1h-4zM591 588h1v9h-1zM595 581h8v1h-8zM603 116h8v1h-8zM603 581h8v1h-8zM611 581h8v1h-8zM619 116h8v1h-8zM619 581h5v1h-5zM623 581h1v7h-1zM623 588h1v9h-1zM623 596h4v1h-4zM627 596h8v1h-8zM635 116h8v1h-8zM635 596h8v1h-8zM643 596h8v1h-8zM651 116h8v1h-8zM651 596h5v1h-5zM655 581h1v7h-1zM655 581h4v1h-4zM655 588h1v9h-1zM659 581h8v1h-8zM667 116h8v1h-8zM667 581h5v1h-5zM671 581h1v7h-1zM671 588h1v9h-1zM671 596h4v1h-4zM675 596h8v1h-8zM683 116h8v1h-8zM683 596h8v1h-8zM691 596h8v1h-8zM699 116h8v1h-8zM699 596h5v1h-5zM703 581h1v7h-1zM703 581h4v1h-4zM703 588h1v9h-1zM707 581h8v1h-8zM715 116h8v1h-8zM715 581h5v1h-5zM719 581h1v7h-1zM719 588h1v9h-1zM719 596h4v1h-4zM723 596h8v1h-8zM731 116h8v1h-8zM731 596h8v1h-8zM735 116h1v7h-1zM735 123h1v9h-1zM735 131h4v1h-4zM739 131h8v1h-8zM739 596h8v1h-8zM747 116h8v1h-8zM747 131h5v1h-5zM747 596h8v1h-8zM751 116h1v7h-1zM751 123h1v9h-1zM755 596h8v1h-8zM763 116h8v1h-8zM763 596h8v1h-8zM771 596h8v1h-8zM779 116h8v1h-8zM779 596h8v1h-8zM787 596h8v1h-8zM795 116h8v1h-8zM795 596h8v1h-8zM803 596h8v1h-8zM811 116h8v1h-8zM811 596h5v1h-5zM815 581h1v7h-1zM815 581h4v1h-4zM815 588h1v9h-1zM819 581h8v1h-8zM827 116h8v1h-8zM827 581h5v1h-5zM831 581h1v7h-1zM831 588h1v9h-1zM831 596h4v1h-4zM835 596h8v1h-8zM843 116h8v1h-8zM843 596h5v1h-5zM847 581h1v7h-1zM847 581h4v1h-4zM847 588h1v9h-1zM851 581h8v1h-8zM859 116h8v1h-8zM859 581h5v1h-5zM863 581h1v7h-1zM863 588h1v9h-1zM863 596h4v1h-4zM867 596h8v1h-8zM875 116h8v1h-8zM875 596h8v1h-8zM883 596h8v1h-8zM891 116h8v1h-8zM891 596h8v1h-8zM899 596h8v1h-8zM907 116h8v1h-8zM907 596h8v1h-8zM915 596h8v1h-8zM923 116h8v1h-8zM923 596h5v1h-5zM927 581h1v7h-1zM927 581h4v1h-4zM927 588h1v9h-1zM931 581h8v1h-8zM939 116h8v1h-8zM939 581h5v1h-5zM943 581h1v7h-1zM943 588h1v9h-1zM943 596h4v1h-4zM947 596h8v1h-8zM955 116h8v1h-8zM955 596h5v1h-5zM959 581h1v7h-1zM959 581h4v1h-4zM959 588h1v9h-1zM963 581h8v1h-8zM971 116h8v1h-8zM971 581h5v1h-5zM975 581h1v7h-1zM975 588h1v9h-1zM975 596h4v1h-4zM979 596h8v1h-8zM987 116h8v1h-8zM987 596h5v1h-5zM991 581h1v7h-1zM991 581h4v1h-4zM991 588h1v9h-1zM995 581h8v1h-8zM1003 116h8v1h-8zM1003 581h5v1h-5zM1007 581h1v7h-1zM1007 588h1v9h-1zM1007 596h4v1h-4zM1011 596h8v1h-8zM1019 116h8v1h-8zM1019 596h8v1h-8zM1027 596h8v1h-8zM1035 116h8v1h-8zM1035 596h5v1h-5zM1039 116h1v7h-1zM1039 123h1v9h-1zM1039 131h4v1h-4zM1039 551h1v7h-1zM1039 551h4v1h-4zM1039 558h1v15h-1zM1039 573h1v15h-1zM1039 588h1v9h-1zM1043 131h8v1h-8zM1043 551h8v1h-8zM1051 116h8v1h-8zM1051 131h5v1h-5zM1051 461h8v1h-8zM1051 551h5v1h-5zM1055 101h1v7h-1zM1055 101h4v1h-4zM1055 108h1v15h-1zM1055 123h1v9h-1zM1055 446h1v7h-1zM1055 446h4v1h-4zM1055 453h1v15h-1zM1055 468h1v15h-1zM1055 483h1v15h-1zM1055 498h1v15h-1zM1055 513h1v15h-1zM1055 528h1v15h-1zM1055 543h1v9h-1zM1059 101h8v1h-8zM1059 446h8v1h-8zM1067 101h8v1h-8zM1067 446h5v1h-5zM1067 461h8v1h-8zM1071 446h1v7h-1zM1071 453h1v15h-1zM1071 468h1v15h-1zM1071 483h1v15h-1zM1071 498h1v15h-1zM1071 513h1v15h-1zM1071 528h1v15h-1zM1071 543h1v15h-1zM1071 558h1v15h-1zM1071 573h1v15h-1zM1071 588h1v15h-1zM1071 603h1v15h-1zM1071 618h1v15h-1zM1071 633h1v15h-1zM1071 648h1v15h-1zM1071 663h1v9h-1zM1071 671h4v1h-4zM1075 101h8v1h-8zM1075 671h8v1h-8zM1083 101h5v1h-5zM1083 116h8v1h-8zM1083 671h5v1h-5zM1087 101h1v7h-1zM1087 108h1v15h-1zM1087 123h1v9h-1zM1087 131h4v1h-4zM1087 596h1v7h-1zM1087 596h4v1h-4zM1087 603h1v15h-1zM1087 618h1v15h-1zM1087 633h1v15h-1zM1087 648h1v15h-1zM1087 663h1v9h-1zM1091 131h8v1h-8zM1091 596h8v1h-8zM1099 116h8v1h-8zM1099 131h5v1h-5zM1099 461h8v1h-8zM1099 596h5v1h-5zM1103 101h1v7h-1zM1103 101h4v1h-4zM1103 108h1v15h-1zM1103 123h1v9h-1zM1103 446h1v7h-1zM1103 446h4v1h-4zM1103 453h1v15h-1zM1103 468h1v15h-1zM1103 483h1v15h-1zM1103 498h1v15h-1zM1103 513h1v15h-1zM1103 528h1v15h-1zM1103 543h1v15h-1zM1103 558h1v15h-1zM1103 573h1v15h-1zM1103 588h1v9h-1zM1107 101h8v1h-8zM1107 446h8v1h-8zM1115 101h8v1h-8zM1115 446h5v1h-5zM1115 461h8v1h-8zM1119 446h1v7h-1zM1119 453h1v15h-1zM1119 468h1v15h-1zM1119 483h1v15h-1zM1119 498h1v15h-1zM1119 513h1v15h-1zM1119 528h1v15h-1zM1119 543h1v15h-1zM1119 558h1v15h-1zM1119 573h1v15h-1zM1119 588h1v15h-1zM1119 603h1v15h-1zM1119 618h1v15h-1zM1119 633h1v15h-1zM1119 648h1v15h-1zM1119 663h1v9h-1zM1119 671h4v1h-4zM1123 101h8v1h-8zM1123 671h8v1h-8zM1131 101h5v1h-5zM1131 116h8v1h-8zM1131 671h5v1h-5zM1135 101h1v7h-1zM1135 108h1v9h-1zM1135 581h1v7h-1zM1135 581h4v1h-4zM1135 588h1v15h-1zM1135 603h1v15h-1zM1135 618h1v15h-1zM1135 633h1v15h-1zM1135 648h1v15h-1zM1135 663h1v9h-1zM1139 581h8v1h-8zM1147 116h8v1h-8zM1147 581h8v1h-8zM1155 581h8v1h-8zM1163 116h8v1h-8zM1163 581h5v1h-5zM1167 581h1v7h-1zM1167 588h1v9h-1zM1167 596h4v1h-4zM1171 596h8v1h-8zM1179 116h8v1h-8zM1179 596h8v1h-8zM1187 596h8v1h-8zM1195 116h8v1h-8zM1195 596h5v1h-5zM1199 581h1v7h-1zM1199 581h4v1h-4zM1199 588h1v9h-1zM1203 581h8v1h-8zM1211 116h8v1h-8zM1211 581h5v1h-5zM1215 116h1v7h-1zM1215 123h1v15h-1zM1215 138h1v15h-1zM1215 153h1v15h-1zM1215 168h1v15h-1zM1215 183h1v15h-1zM1215 198h1v15h-1zM1215 213h1v15h-1zM1215 228h1v15h-1zM1215 243h1v15h-1zM1215 258h1v15h-1zM1215 273h1v15h-1zM1215 288h1v15h-1zM1215 303h1v15h-1zM1215 318h1v15h-1zM1215 333h1v15h-1zM1215 348h1v15h-1zM1215 363h1v15h-1zM1215 378h1v9h-1zM1215 386h4v1h-4zM1215 581h1v7h-1zM1215 588h1v15h-1zM1215 603h1v15h-1zM1215 618h1v15h-1zM1215 633h1v15h-1zM1215 648h1v15h-1zM1215 663h1v15h-1zM1215 678h1v15h-1zM1215 693h1v15h-1zM1215 708h1v15h-1zM1215 723h1v15h-1zM1215 738h1v9h-1zM1215 746h4v1h-4zM1219 386h8v1h-8zM1219 746h8v1h-8zM1227 386h5v1h-5zM1227 746h8v1h-8zM1231 386h1v7h-1zM1231 393h1v9h-1zM1231 401h4v1h-4zM1235 401h8v1h-8zM1235 746h8v1h-8zM1243 401h8v1h-8zM1243 746h8v1h-8zM1251 401h8v1h-8zM1251 746h8v1h-8zM1259 401h8v1h-8zM1259 746h8v1h-8zM1267 401h8v1h-8zM1267 746h8v1h-8zM1275 401h8v1h-8zM1275 746h8v1h-8zM1283 401h8v1h-8zM1283 746h8v1h-8zM1291 401h8v1h-8zM1291 746h8v1h-8zM1299 401h8v1h-8zM1299 746h8v1h-8zM1307 401h8v1h-8zM1307 746h8v1h-8zM1315 401h8v1h-8zM1315 746h8v1h-8zM1323 401h8v1h-8zM1323 746h8v1h-8zM1331 401h8v1h-8zM1331 746h8v1h-8zM1339 401h8v1h-8zM1339 746h8v1h-8zM1347 401h8v1h-8zM1347 746h8v1h-8zM1355 401h8v1h-8zM1355 746h8v1h-8zM1363 401h8v1h-8zM1363 746h8v1h-8zM1371 401h8v1h-8zM1371 746h8v1h-8zM1379 401h8v1h-8zM1379 746h8v1h-8zM1387 401h8v1h-8zM1387 746h8v1h-8zM1395 401h8v1h-8zM1395 746h8v1h-8zM1403 401h8v1h-8zM1403 746h8v1h-8zM1411 401h8v1h-8zM1411 746h8v1h-8zM1419 401h8v1h-8zM1419 746h8v1h-8zM1427 401h8v1h-8zM1427 746h8v1h-8zM1435 401h8v1h-8zM1435 746h8v1h-8zM1443 401h8v1h-8zM1443 746h8v1h-8zM1451 401h8v1h-8zM1451 746h8v1h-8zM1459 401h8v1h-8zM1459 746h8v1h-8zM1467 401h8v1h-8zM1467 746h8v1h-8zM1475 401h8v1h-8zM1475 746h8v1h-8zM1483 401h8v1h-8zM1483 746h8v1h-8zM1491 401h8v1h-8zM1491 746h8v1h-8zM1499 401h8v1h-8zM1499 746h8v1h-8zM1507 401h8v1h-8zM1507 746h8v1h-8zM1515 401h8v1h-8zM1515 746h8v1h-8zM1523 401h8v1h-8zM1523 746h8v1h-8zM1531 401h8v1h-8zM1531 746h8v1h-8zM1539 401h8v1h-8zM1539 746h8v1h-8zM1547 401h8v1h-8zM1547 746h8v1h-8zM1555 401h8v1h-8zM1555 746h8v1h-8zM1563 401h8v1h-8zM1563 746h8v1h-8zM1571 401h8v1h-8zM1571 746h8v1h-8zM1579 401h8v1h-8zM1579 746h8v1h-8zM1587 401h8v1h-8zM1587 746h8v1h-8zM1595 401h8v1h-8zM1595 746h8v1h-8zM1603 401h8v1h-8zM1603 746h8v1h-8zM1611 401h8v1h-8zM1611 746h8v1h-8zM1619 401h8v1h-8zM1619 746h8v1h-8zM1627 401h8v1h-8zM1627 746h8v1h-8zM1635 401h8v1h-8zM1635 746h8v1h-8zM1643 401h8v1h-8zM1643 746h8v1h-8zM1651 401h8v1h-8zM1651 746h8v1h-8z"/></svg>
<div class="t" style="left:19px;top:35px;color:#1abc9c">Device 0</div>
<div class="t" style="left:91px;top:35px;color:#fcfcfc">[Radeon RX 7900 XTX]</div>
<div class="t" style="left:259px;top:35px;color:#1abc9c">PCIe</div>
<div class="t" style="left:299px;top:35px;color:#9b59b6">GEN</div>
<div class="t" style="left:331px;top:35px;color:#fcfcfc">4@16x</div>
<div class="t" style="left:379px;top:35px;color:#9b59b6">RX:</div>
<div class="t" style="left:411px;top:35px;color:#fcfcfc">N/A</div>
<div class="t" style="left:443px;top:35px;color:#9b59b6">TX:</div>
<div class="t" style="left:475px;top:35px;color:#fcfcfc">N/A</div>
<div class="t" style="left:19px;top:50px;color:#1abc9c">GPU</div>
<div class="t" style="left:51px;top:50px;color:#fcfcfc">0MHz</div>
<div class="t" style="left:115px;top:50px;color:#1abc9c">MEM</div>
<div class="t" style="left:147px;top:50px;color:#fcfcfc">96MHz</div>
<div class="t" style="left:211px;top:50px;color:#1abc9c">TEMP</div>
<div class="t" style="left:259px;top:50px;color:#11d116">55</div>
<div class="t" style="left:275px;top:50px;color:#fcfcfc">°C</div>
<div class="t" style="left:299px;top:50px;color:#1abc9c">FAN</div>
<div class="t" style="left:339px;top:50px;color:#fcfcfc">23%</div>
<div class="t" style="left:371px;top:50px;color:#1abc9c">POW</div>
<div class="t" style="left:411px;top:50px;color:#fcfcfc">28 / 291 W</div>
<div class="t" style="left:19px;top:65px;color:#1abc9c">GPU</div>
<div class="t" style="left:43px;top:65px;color:#fcfcfc">[</div>
<div class="t" style="left:299px;top:65px;color:#fcfcfc">0%]</div>
<div class="t" style="left:331px;top:65px;color:#1abc9c">MEM</div>
<div class="t" style="left:355px;top:65px;color:#fcfcfc">[</div>
<div class="t" style="left:363px;top:65px;color:#11d116">|||||||||||||||22.938Gi/23.984</div>
<div class="t" style="left:603px;top:65px;color:#fcfcfc">Gi]</div>
<div class="t" style="left:635px;top:35px;color:#1abc9c">Device 1</div>
<div class="t" style="left:707px;top:35px;color:#fcfcfc">[Radeon RX 7900 XTX]</div>
<div class="t" style="left:875px;top:35px;color:#1abc9c">PCIe</div>
<div class="t" style="left:915px;top:35px;color:#9b59b6">GEN</div>
<div class="t" style="left:947px;top:35px;color:#fcfcfc">4@16x</div>
<div class="t" style="left:995px;top:35px;color:#9b59b6">RX:</div>
<div class="t" style="left:1027px;top:35px;color:#fcfcfc">N/A</div>
<div class="t" style="left:1059px;top:35px;color:#9b59b6">TX:</div>
<div class="t" style="left:1091px;top:35px;color:#fcfcfc">N/A</div>
<div class="t" style="left:635px;top:50px;color:#1abc9c">GPU</div>
<div class="t" style="left:667px;top:50px;color:#fcfcfc">0MHz</div>
<div class="t" style="left:731px;top:50px;color:#1abc9c">MEM</div>
<div class="t" style="left:763px;top:50px;color:#fcfcfc">96MHz</div>
<div class="t" style="left:827px;top:50px;color:#1abc9c">TEMP</div>
<div class="t" style="left:875px;top:50px;color:#11d116">54</div>
<div class="t" style="left:891px;top:50px;color:#fcfcfc">°C</div>
<div class="t" style="left:915px;top:50px;color:#1abc9c">FAN</div>
<div class="t" style="left:955px;top:50px;color:#fcfcfc">22%</div>
<div class="t" style="left:987px;top:50px;color:#1abc9c">POW</div>
<div class="t" style="left:1027px;top:50px;color:#fcfcfc">27 / 291 W</div>
<div class="t" style="left:635px;top:65px;color:#1abc9c">GPU</div>
<div class="t" style="left:659px;top:65px;color:#fcfcfc">[</div>
<div class="t" style="left:915px;top:65px;color:#fcfcfc">0%]</div>
<div class="t" style="left:947px;top:65px;color:#1abc9c">MEM</div>
<div class="t" style="left:971px;top:65px;color:#fcfcfc">[</div>
<div class="t" style="left:979px;top:65px;color:#11d116">|||||||||||||||23.105Gi/23.984G</div>
<div class="t" style="left:1227px;top:65px;color:#fcfcfc">i]</div>
<div class="t" style="left:11px;top:95px;color:#fcfcfc">100</div>
<div class="t" style="left:11px;top:170px;color:#fcfcfc"> 75</div>
<div class="t" style="left:11px;top:245px;color:#fcfcfc"> 50</div>
<div class="t" style="left:11px;top:320px;color:#fcfcfc"> 25</div>
<div class="t" style="left:11px;top:395px;color:#fcfcfc">  0</div>
<div class="t" style="left:43px;top:95px;color:#1abc9c">GPU0 %</div>
<div class="t" style="left:43px;top:110px;color:#f67400">GPU0 mem%</div>
<div class="t" style="left:43px;top:410px;color:#fcfcfc">101s</div>
<div class="t" style="left:435px;top:410px;color:#fcfcfc">75s</div>
<div class="t" style="left:843px;top:410px;color:#fcfcfc">50s</div>
<div class="t" style="left:1243px;top:410px;color:#fcfcfc">25s</div>
<div class="t" style="left:1643px;top:410px;color:#fcfcfc">0s</div>
<div class="t" style="left:11px;top:440px;color:#fcfcfc">100</div>
<div class="t" style="left:11px;top:515px;color:#fcfcfc"> 75</div>
<div class="t" style="left:11px;top:590px;color:#fcfcfc"> 50</div>
<div class="t" style="left:11px;top:665px;color:#fcfcfc"> 25</div>
<div class="t" style="left:11px;top:740px;color:#fcfcfc">  0</div>
<div class="t" style="left:43px;top:440px;color:#1abc9c">GPU1 %</div>
<div class="t" style="left:43px;top:455px;color:#f67400">GPU1 mem%</div>
<div class="t" style="left:43px;top:755px;color:#fcfcfc">101s</div>
<div class="t" style="left:435px;top:755px;color:#fcfcfc">75s</div>
<div class="t" style="left:843px;top:755px;color:#fcfcfc">50s</div>
<div class="t" style="left:1243px;top:755px;color:#fcfcfc">25s</div>
<div class="t" style="left:1643px;top:755px;color:#fcfcfc">0s</div>
<div class="bgr" style="left:11px;top:769px;width:248px;background:#11d116"></div>
<div class="t" style="left:11px;top:770px;color:#232627">    PID USER DEV     TYPE  GPU </div>
<div class="bgr" style="left:259px;top:769px;width:112px;background:#1abc9c"></div>
<div class="t" style="left:259px;top:770px;color:#232627">       GPU MEM</div>
<div class="bgr" style="left:371px;top:769px;width:1304px;background:#11d116"></div>
<div class="t" style="left:371px;top:770px;color:#232627">    CPU  HOST MEM Command                                                                                                                                          </div>
<div class="bgr" style="left:11px;top:784px;width:1664px;background:#1abc9c"></div>
<div class="t" style="left:11px;top:785px;color:#232627">2422906 root   1  Graphic   0%  23412MiB  95%     0%   1651MiB /usr/bin/ollama runner --model /root/.ollama/models/blobs/sha256-4824460d29f2058aaf6e1118a63a7a197a09bed509f0e7d4e2efb1ee273b447d --ctx-size 8192</div>
<div class="t" style="left:11px;top:800px;color:#fcfcfc">2422906 root   0  </div>
<div class="t" style="left:155px;top:800px;color:#f67400">Graphic</div>
<div class="t" style="left:211px;top:800px;color:#fcfcfc">   0%  23241MiB  95%     0%   1651MiB /usr/bin/ollama runner --model /root/.ollama/models/blobs/sha256-4824460d29f2058aaf6e1118a63a7a197a09bed509f0e7d4e2efb1ee273b447d --ctx-size 8192</div>
<div class="t" style="left:11px;top:815px;color:#fcfcfc">  16782 root   1  </div>
<div class="t" style="left:155px;top:815px;color:#f67400">Graphic</div>
<div class="t" style="left:211px;top:815px;color:#fcfcfc">   0%      0MiB   0%     0%     22MiB nvtop</div>
</body></html>
